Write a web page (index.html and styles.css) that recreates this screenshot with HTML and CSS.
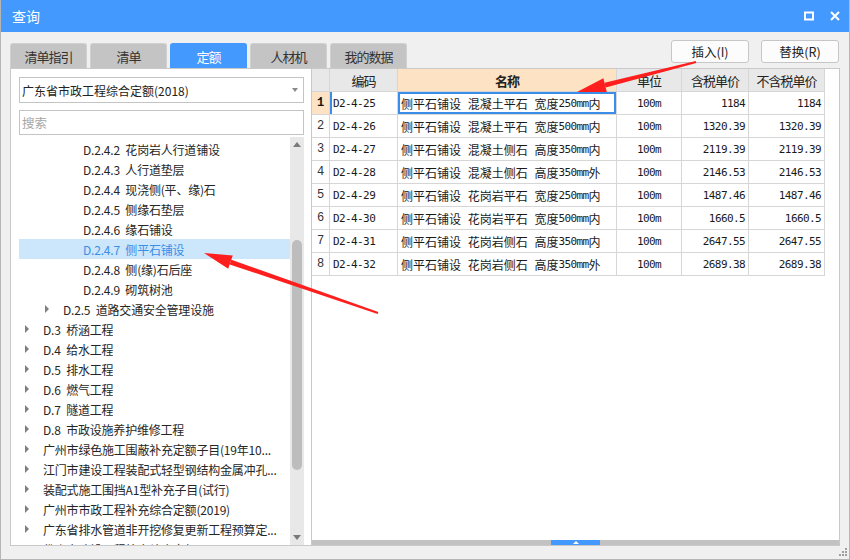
FILE: index.html
```html
<!DOCTYPE html>
<html lang="zh-CN">
<head>
<meta charset="utf-8">
<title>查询</title>
<link rel="stylesheet" href="styles.css">
</head>
<body>
<div class="window">
  <div class="titlebar">
    <span class="title">查询</span>
    <div class="win-ctrls">
      <svg width="10" height="10" viewBox="0 0 10 10"><rect x="1" y="1.5" width="8" height="7" fill="none" stroke="#fff" stroke-width="2"/></svg>
      <svg width="10" height="10" viewBox="0 0 10 10"><path d="M1 1 L9 9 M9 1 L1 9" stroke="#fff" stroke-width="2" fill="none"/></svg>
    </div>
  </div>

  <div class="toolbar">
    <div class="tabs">
      <div class="tab">清单指引</div>
      <div class="tab">清单</div>
      <div class="tab active">定额</div>
      <div class="tab">人材机</div>
      <div class="tab">我的数据</div>
    </div>
    <div class="actions">
      <button class="btn">插入(I)</button>
      <button class="btn">替换(R)</button>
    </div>
  </div>

  <div class="main">
    <div class="left">
      <div class="select">广东省市政工程综合定额(2018)<span class="caret"></span></div>
      <div class="search">搜索</div>
      <div class="tree-wrap">
        <div class="tree">
          <div class="row l2"><span class="tw"></span><span class="txt">D.2.4.2 花岗岩人行道铺设</span></div>
          <div class="row l2"><span class="tw"></span><span class="txt">D.2.4.3 人行道垫层</span></div>
          <div class="row l2"><span class="tw"></span><span class="txt">D.2.4.4 现浇侧(平、缘)石</span></div>
          <div class="row l2"><span class="tw"></span><span class="txt">D.2.4.5 侧缘石垫层</span></div>
          <div class="row l2"><span class="tw"></span><span class="txt">D.2.4.6 缘石铺设</span></div>
          <div class="row l2 selected"><span class="tw"></span><span class="txt">D.2.4.7 侧平石铺设</span></div>
          <div class="row l2"><span class="tw"></span><span class="txt">D.2.4.8 侧(缘)石后座</span></div>
          <div class="row l2"><span class="tw"></span><span class="txt">D.2.4.9 砌筑树池</span></div>
          <div class="row l1"><span class="tw"><i class="tri"></i></span><span class="txt">D.2.5 道路交通安全管理设施</span></div>
          <div class="row l0"><span class="tw"><i class="tri"></i></span><span class="txt">D.3 桥涵工程</span></div>
          <div class="row l0"><span class="tw"><i class="tri"></i></span><span class="txt">D.4 给水工程</span></div>
          <div class="row l0"><span class="tw"><i class="tri"></i></span><span class="txt">D.5 排水工程</span></div>
          <div class="row l0"><span class="tw"><i class="tri"></i></span><span class="txt">D.6 燃气工程</span></div>
          <div class="row l0"><span class="tw"><i class="tri"></i></span><span class="txt">D.7 隧道工程</span></div>
          <div class="row l0"><span class="tw"><i class="tri"></i></span><span class="txt">D.8 市政设施养护维修工程</span></div>
          <div class="row l0"><span class="tw"><i class="tri"></i></span><span class="txt">广州市绿色施工围蔽补充定额子目(19年10...</span></div>
          <div class="row l0"><span class="tw"><i class="tri"></i></span><span class="txt">江门市建设工程装配式轻型钢结构金属冲孔...</span></div>
          <div class="row l0"><span class="tw"><i class="tri"></i></span><span class="txt">装配式施工围挡A1型补充子目(试行)</span></div>
          <div class="row l0"><span class="tw"><i class="tri"></i></span><span class="txt">广州市市政工程补充综合定额(2019)</span></div>
          <div class="row l0"><span class="tw"><i class="tri"></i></span><span class="txt">广东省排水管道非开挖修复更新工程预算定...</span></div>
          <div class="row l0"><span class="tw"><i class="tri"></i></span><span class="txt">佛山市建设工程补充综合定额(2018)</span></div>
        </div>
        <div class="vscroll">
          <i class="arr-up"></i>
          <span class="thumb"></span>
          <i class="arr-down"></i>
        </div>
      </div>
    </div>

    <div class="right">
      <div class="grid">
        <div class="c h"></div>
        <div class="c h">编码</div>
        <div class="c h hl">名称</div>
        <div class="c h">单位</div>
        <div class="c h">含税单价</div>
        <div class="c h">不含税单价</div>

        <div class="c n cur">1</div>
        <div class="c code mark">D2-4-25</div>
        <div class="c name sel">侧平石铺设 混凝土平石 宽度<span class="m">250mm</span>内</div>
        <div class="c u">100m</div>
        <div class="c p">1184</div>
        <div class="c p">1184</div>

        <div class="c n">2</div>
        <div class="c code">D2-4-26</div>
        <div class="c name">侧平石铺设 混凝土平石 宽度<span class="m">500mm</span>内</div>
        <div class="c u">100m</div>
        <div class="c p">1320.39</div>
        <div class="c p">1320.39</div>

        <div class="c n">3</div>
        <div class="c code">D2-4-27</div>
        <div class="c name">侧平石铺设 混凝土侧石 高度<span class="m">350mm</span>内</div>
        <div class="c u">100m</div>
        <div class="c p">2119.39</div>
        <div class="c p">2119.39</div>

        <div class="c n">4</div>
        <div class="c code">D2-4-28</div>
        <div class="c name">侧平石铺设 混凝土侧石 高度<span class="m">350mm</span>外</div>
        <div class="c u">100m</div>
        <div class="c p">2146.53</div>
        <div class="c p">2146.53</div>

        <div class="c n">5</div>
        <div class="c code">D2-4-29</div>
        <div class="c name">侧平石铺设 花岗岩平石 宽度<span class="m">250mm</span>内</div>
        <div class="c u">100m</div>
        <div class="c p">1487.46</div>
        <div class="c p">1487.46</div>

        <div class="c n">6</div>
        <div class="c code">D2-4-30</div>
        <div class="c name">侧平石铺设 花岗岩平石 宽度<span class="m">500mm</span>内</div>
        <div class="c u">100m</div>
        <div class="c p">1660.5</div>
        <div class="c p">1660.5</div>

        <div class="c n">7</div>
        <div class="c code">D2-4-31</div>
        <div class="c name">侧平石铺设 花岗岩侧石 高度<span class="m">350mm</span>内</div>
        <div class="c u">100m</div>
        <div class="c p">2647.55</div>
        <div class="c p">2647.55</div>

        <div class="c n">8</div>
        <div class="c code">D2-4-32</div>
        <div class="c name">侧平石铺设 花岗岩侧石 高度<span class="m">350mm</span>外</div>
        <div class="c u">100m</div>
        <div class="c p">2689.38</div>
        <div class="c p">2689.38</div>
      </div>
      <div class="hscroll"><span class="handle"><i class="handle-tri"></i></span></div>
    </div>
  </div>

  <div class="statusbar">
    <svg class="grip" width="9" height="9" viewBox="0 0 9 9">
      <rect x="6" y="0" width="2" height="2" fill="#a0a0a0"/>
      <rect x="3" y="3" width="2" height="2" fill="#a0a0a0"/>
      <rect x="6" y="3" width="2" height="2" fill="#a0a0a0"/>
      <rect x="0" y="6" width="2" height="2" fill="#a0a0a0"/>
      <rect x="3" y="6" width="2" height="2" fill="#a0a0a0"/>
      <rect x="6" y="6" width="2" height="2" fill="#a0a0a0"/>
    </svg>
  </div>
</div>

<svg class="annot" width="850" height="560" viewBox="0 0 850 560">
  <polygon fill="#ff1e1e" points="378.3,312.1 377.7,313.9 229.7,264.5 231.3,259.7"/>
  <polygon fill="#ff1e1e" points="204,253 232.8,255.5 228.2,268.7"/>
  <polygon fill="#ff1e1e" points="696.2,63 695.8,61 604.5,82.7 605.7,87.5"/>
  <polygon fill="#ff1e1e" points="577,92 606.8,91.9 603.4,78.3"/>
</svg>
</body>
</html>
```

FILE: styles.css
```css
* { box-sizing: border-box; }

body {
  margin: 0;
  background: #f0f0f0;
  font-family: "Noto Sans CJK SC", "Noto Sans", sans-serif;
  position: relative;
}

.window {
  width: 850px;
  height: 560px;
  border: 1px solid #b5b5b5;
  border-top: none;
  background: #f0f0f0;
  display: flex;
  flex-direction: column;
  overflow: hidden;
}

/* title bar */
.titlebar {
  height: 32px;
  flex: none;
  margin: 0 -1px;
  background: #4499ff;
  display: flex;
  align-items: center;
  padding: 0 10px 0 12px;
  color: #fff;
  font-size: 14px;
}
.win-ctrls {
  margin-left: auto;
  display: flex;
  align-items: center;
  gap: 16px;
}

/* toolbar with tabs + buttons */
.toolbar {
  height: 36px;
  flex: none;
  display: flex;
  padding: 0 10px 0 9px;
}
.tabs {
  display: flex;
  align-self: flex-end;
  gap: 3px;
}
.tab {
  width: 77px;
  height: 25px;
  background: #c4c4c4;
  border: 1px solid #d0d0d0;
  border-bottom: none;
  border-radius: 3px 3px 0 0;
  display: flex;
  align-items: center;
  justify-content: center;
  font-size: 13px;
  letter-spacing: -1px;
  color: #333;
}
.tab.active {
  background: #4499ff;
  border-color: #4499ff;
  color: #fff;
}
.actions {
  margin-left: auto;
  display: flex;
  gap: 12px;
  padding-top: 8px;
}
.btn {
  width: 78px;
  height: 23px;
  padding: 0;
  background: #fcfcfc;
  border: 1px solid #c6c6c6;
  border-radius: 3px;
  font-family: inherit;
  font-size: 12.5px;
  color: #222;
}

/* main area */
.main {
  height: 478px;
  flex: none;
  display: flex;
  padding: 0 9px;
}

.left {
  width: 301px;
  flex: none;
  border: 1px solid #c9c9c9;
  border-right: none;
  background: #fff;
  padding: 8px 7px 0 8px;
  display: flex;
  flex-direction: column;
}
.select {
  height: 26px;
  flex: none;
  border: 1px solid #c4c4c4;
  display: flex;
  align-items: center;
  padding-left: 2px;
  font-size: 12px;
  color: #222;
}
.caret {
  margin-left: auto;
  margin-right: 5px;
  width: 0;
  height: 0;
  border-left: 3.5px solid transparent;
  border-right: 3.5px solid transparent;
  border-top: 4px solid #8a8a8a;
}
.search {
  margin-top: 7px;
  height: 25px;
  flex: none;
  border: 1px solid #c4c4c4;
  display: flex;
  align-items: center;
  padding-left: 2px;
  font-size: 12.5px;
  color: #a6a6a6;
}
.tree-wrap {
  margin-top: 2px;
  flex: 1;
  min-height: 0;
  display: flex;
}
.tree {
  flex: 1;
  min-width: 0;
  overflow: hidden;
  padding-top: 2px;
}
.row {
  height: 20px;
  display: flex;
  align-items: center;
  font-size: 12px;
  color: #262626;
  white-space: nowrap;
  padding-right: 6px;
}
.row.l1 { padding-left: 20px; }
.row.l2 { padding-left: 40px; }
.row.selected {
  background: #cce6fc;
  color: #3a8ee6;
}
.tw {
  width: 16px;
  margin-right: 8px;
  flex: none;
  display: flex;
  justify-content: center;
}
.tri {
  width: 0;
  height: 0;
  border-top: 4px solid transparent;
  border-bottom: 4px solid transparent;
  border-left: 4px solid #7f7f7f;
}
.txt {
  overflow: hidden;
  text-overflow: clip;
  word-spacing: 3px;
  letter-spacing: -0.2px;
}

.vscroll {
  width: 14px;
  flex: none;
  background: #e8e8e8;
  display: flex;
  flex-direction: column;
  align-items: center;
}
.arr-up {
  margin-top: 5px;
  width: 0;
  height: 0;
  border-left: 4.5px solid transparent;
  border-right: 4.5px solid transparent;
  border-bottom: 5px solid #7a7a7a;
}
.thumb {
  margin-top: 93px;
  width: 10px;
  height: 230px;
  border-radius: 5px;
  background: #bdbdbd;
}
.arr-down {
  margin-top: auto;
  margin-bottom: 5px;
  width: 0;
  height: 0;
  border-left: 4.5px solid transparent;
  border-right: 4.5px solid transparent;
  border-top: 5px solid #7a7a7a;
}

/* right grid */
.right {
  flex: 1;
  min-width: 0;
  border: 1px solid #c9c9c9;
  background: #fff;
  display: flex;
  flex-direction: column;
}
.grid {
  flex: 1;
  display: grid;
  grid-template-columns: 18px 68px 219px 65px 67px 76px;
  grid-auto-rows: 23px;
  align-content: start;
}
.c {
  border-right: 1px solid #d6d6d6;
  border-bottom: 1px solid #d6d6d6;
  display: flex;
  align-items: center;
  padding: 0 3px;
  font-size: 12px;
  color: #1a1a1a;
  white-space: nowrap;
  overflow: hidden;
}
.h {
  background: #e8e8e8;
  justify-content: center;
  font-size: 13px;
  letter-spacing: -1px;
  color: #222;
}
.h.hl {
  background: #fde3c4;
  font-weight: bold;
}
.n {
  padding: 0;
  justify-content: center;
  font-family: "Liberation Mono", monospace;
  font-size: 12px;
  color: #333;
}
.n.cur {
  background: #fde3c4;
  font-weight: bold;
  color: #111;
}
.code, .u, .p, .m {
  font-family: "DejaVu Sans Mono", monospace;
  font-size: 11px;
  letter-spacing: -0.6px;
}
.u { justify-content: center; }
.p { justify-content: flex-end; }
.name { word-spacing: 4px; }
.m { word-spacing: normal; }
.sel { box-shadow: inset 0 0 0 2px #3b8ee8; }
.mark { box-shadow: inset 2px 0 0 #3b8ee8; }

.hscroll {
  height: 5px;
  flex: none;
  background: #c2c2c2;
  display: flex;
  justify-content: center;
}
.handle {
  width: 49px;
  background: #4499ff;
  display: flex;
  justify-content: center;
  align-items: center;
}
.handle-tri {
  width: 0;
  height: 0;
  border-left: 3px solid transparent;
  border-right: 3px solid transparent;
  border-bottom: 3px solid #fff;
}

.statusbar {
  flex: 1;
  display: flex;
  justify-content: flex-end;
  align-items: flex-end;
  padding: 0 1px 2px 0;
}

/* red annotation arrows drawn over the UI */
.annot {
  position: absolute;
  top: 0;
  left: 0;
  pointer-events: none;
}
```
